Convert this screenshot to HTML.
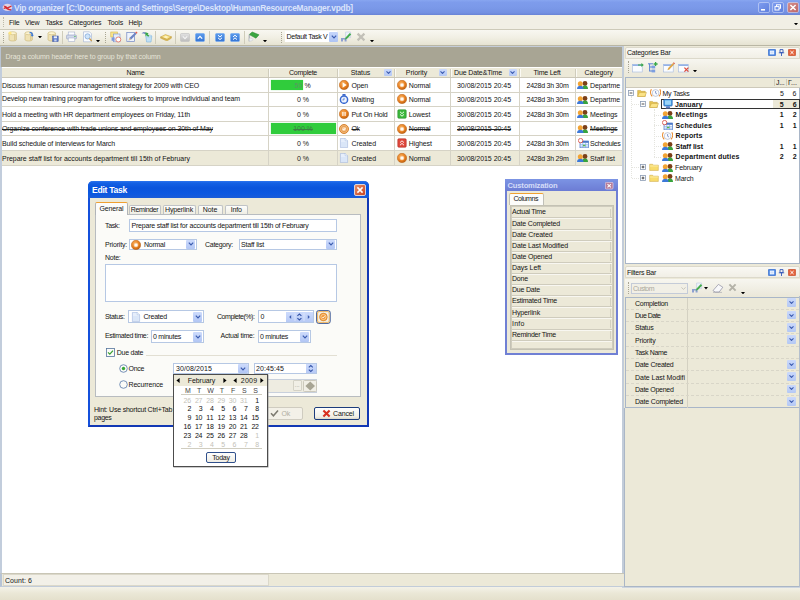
<!DOCTYPE html>
<html><head><meta charset="utf-8"><title>Vip organizer</title>
<style>
*{box-sizing:border-box;margin:0;padding:0}
html,body{width:800px;height:600px;overflow:hidden;background:#ece9d8}
body{position:relative;font-family:"Liberation Sans",sans-serif;font-size:7px;color:#141414}
.a{position:absolute}
.t{position:absolute;white-space:nowrap;font-size:7px;line-height:10px;height:10px}
.b{font-weight:bold}
</style></head><body>
<svg class="a" width="0" height="0" style="left:0;top:0"><defs><radialGradient id="og" cx=".4" cy=".35" r=".7"><stop offset="0" stop-color="#f8b060"/><stop offset=".6" stop-color="#e88020"/><stop offset="1" stop-color="#b85c10"/></radialGradient></defs></svg>
<div class="a" style="left:0px;top:0px;width:800px;height:15px;background:linear-gradient(#88a6f0 0,#7e9cec 15%,#7a98e8 55%,#7390e2 85%,#6883d6 100%)"></div>
<svg class="a" style="left:1.5px;top:2.5px" width="11" height="9" viewBox="0 0 11 9"><ellipse cx="5.400" cy="4.400" rx="4.800" ry="3.600" fill="#f0dce4" opacity=".85"/><path d="M1.400 2.400c1.600 0 3 .8 4 1.800l3.800-1.600.6 1-3.600 1.800c.8.400 2 .8 3.200.8l-.4 1.200C7 7.400 5 6.600 3.600 5.400L2 6l-.6-1 1.400-.6C2.200 3.800 1.800 3.200 1.400 2.400Z" fill="#d42c34"/></svg>
<div class="t b" style="left:14.00px;top:3.20px;letter-spacing:-0.215px;font-size:8.4px;color:#dbe4fb;">Vip organizer [C:\Documents and Settings\Serge\Desktop\HumanResourceManager.vpdb]</div>
<svg class="a" style="left:757.5px;top:2px" width="12" height="11" viewBox="0 0 12 11"><defs><linearGradient id="g757.5" x1="0" y1="0" x2="1" y2="1"><stop offset="0" stop-color="#7f9df0"/><stop offset="1" stop-color="#5f7fdc"/></linearGradient></defs><rect x=".5" y=".5" width="11" height="10" rx="1.5" fill="url(#g757.5)" stroke="#dfe6fb" stroke-opacity=".75" stroke-width=".7"/><rect x="3" y="7" width="4" height="1.6" fill="#fff"/></svg>
<svg class="a" style="left:772px;top:2px" width="12" height="11" viewBox="0 0 12 11"><defs><linearGradient id="g772" x1="0" y1="0" x2="1" y2="1"><stop offset="0" stop-color="#7f9df0"/><stop offset="1" stop-color="#5f7fdc"/></linearGradient></defs><rect x=".5" y=".5" width="11" height="10" rx="1.5" fill="url(#g772)" stroke="#dfe6fb" stroke-opacity=".75" stroke-width=".7"/><rect x="4.5" y="2.8" width="4" height="3.4" fill="none" stroke="#fff" stroke-width="1"/><rect x="3" y="4.6" width="4" height="3.4" fill="#6f8ee6" stroke="#fff" stroke-width="1"/></svg>
<svg class="a" style="left:786.5px;top:2px" width="12" height="11" viewBox="0 0 12 11"><defs><linearGradient id="g786.5" x1="0" y1="0" x2="1" y2="1"><stop offset="0" stop-color="#d6908c"/><stop offset="1" stop-color="#bc6468"/></linearGradient></defs><rect x=".5" y=".5" width="11" height="10" rx="1.5" fill="url(#g786.5)" stroke="#dfe6fb" stroke-opacity=".75" stroke-width=".7"/><path d="M3.4 3 L8.6 8 M8.6 3 L3.4 8" stroke="#fff" stroke-width="1.5"/></svg>
<div class="a" style="left:0px;top:15px;width:800px;height:14px;background:#f1efe5"></div>
<div class="a" style="left:2.5px;top:17px;width:1px;height:10px;border-left:1px dotted #bdbaa8"></div>
<div class="t" style="left:9.00px;top:17.70px;letter-spacing:-0.195px;">File</div>
<div class="t" style="left:25.00px;top:17.70px;letter-spacing:-0.137px;">View</div>
<div class="t" style="left:45.50px;top:17.70px;letter-spacing:-0.179px;">Tasks</div>
<div class="t" style="left:68.50px;top:17.70px;letter-spacing:-0.085px;">Categories</div>
<div class="t" style="left:107.50px;top:17.70px;letter-spacing:-0.168px;">Tools</div>
<div class="t" style="left:128.50px;top:17.70px;letter-spacing:-0.224px;">Help</div>
<svg class="a" style="left:793.5px;top:23px" width="4" height="2.4" viewBox="0 0 4 2.4"><path d="M0 0h4L2 2.400Z" fill="#000"/></svg>
<div class="a" style="left:0px;top:29px;width:800px;height:17px;background:linear-gradient(#f8f7f1,#f1efe4 50%,#e6e3d2);border-top:1px solid #cdcab9;border-bottom:1px solid #b9b6a4"></div>
<div class="a" style="left:3px;top:32px;width:1px;height:11px;border-left:1px dotted #a9a694"></div>
<svg class="a" style="left:8px;top:31px" width="11" height="12" viewBox="0 0 11 12"><path d="M1 2.2v6.3c0 1 1.6 1.5 3.7 1.5s3.7-.5 3.7-1.5V2.2Z" fill="#efe2b4" stroke="#c8b272" stroke-width=".6"/><ellipse cx="4.7" cy="2.2" rx="3.7" ry="1.5" fill="#fbf3d2" stroke="#cdb878" stroke-width=".6"/><path d="M6.8 3.5v6" stroke="#d8c68e" stroke-width="1.2"/><circle cx="2" cy="2" r="1.6" fill="#ffe680"/></svg>
<svg class="a" style="left:24px;top:31px" width="11" height="12" viewBox="0 0 11 12"><path d="M1 2.2v6.3c0 1 1.6 1.5 3.7 1.5s3.7-.5 3.7-1.5V2.2Z" fill="#efe2b4" stroke="#c8b272" stroke-width=".6"/><ellipse cx="4.7" cy="2.2" rx="3.7" ry="1.5" fill="#fbf3d2" stroke="#cdb878" stroke-width=".6"/><path d="M6.8 3.5v6" stroke="#d8c68e" stroke-width="1.2"/><path d="M5.5 1.2c2-.8 3.6.6 3.4 2.6l1 .1-1.8 1.8-1.5-2 1 .1c0-1-.8-1.7-2.1-1.4Z" fill="#3b78d8"/></svg>
<svg class="a" style="left:38px;top:36px" width="4" height="2.4" viewBox="0 0 4 2.4"><path d="M0 0h4L2 2.4Z" fill="#000"/></svg>
<svg class="a" style="left:47px;top:31px" width="12" height="12" viewBox="0 0 12 12"><path d="M1 2.2v6.3c0 1 1.6 1.5 3.7 1.5s3.7-.5 3.7-1.5V2.2Z" fill="#efe2b4" stroke="#c8b272" stroke-width=".6"/><ellipse cx="4.7" cy="2.2" rx="3.7" ry="1.5" fill="#fbf3d2" stroke="#cdb878" stroke-width=".6"/><path d="M6.8 3.5v6" stroke="#d8c68e" stroke-width="1.2"/><rect x="5.6" y="5" width="5.6" height="5.6" fill="#5a78c8" stroke="#3c549c" stroke-width=".5"/><rect x="6.8" y="5.3" width="3.2" height="2" fill="#e8eefc"/><rect x="7.2" y="8.4" width="2.4" height="2" fill="#c8d2ee"/></svg>
<div class="a" style="left:62px;top:31px;width:1px;height:13px;background:#cfccba"></div>
<svg class="a" style="left:66px;top:31px" width="11" height="12" viewBox="0 0 11 12"><rect x="2.2" y="1" width="6.6" height="3.4" fill="#fdfdff" stroke="#9aa6c4" stroke-width=".5"/><rect x=".6" y="4" width="9.8" height="4" rx=".8" fill="#d2d9ea" stroke="#8e9cc0" stroke-width=".6"/><rect x="2.2" y="7" width="6.6" height="3.6" fill="#fdfdff" stroke="#9aa6c4" stroke-width=".5"/><rect x="8.2" y="5" width="1.4" height="1" fill="#58c060"/></svg>
<svg class="a" style="left:82px;top:31px" width="11" height="12" viewBox="0 0 11 12"><path d="M1.5 .8h6l2 2v8h-8Z" fill="#fafcff" stroke="#9fb0d0" stroke-width=".6"/><circle cx="5.6" cy="5.4" r="2.6" fill="#cfe4f8" stroke="#7aa2d8" stroke-width=".7"/><path d="M7.5 7.5l2.2 2.6" stroke="#c89848" stroke-width="1.3"/></svg>
<svg class="a" style="left:96px;top:40px" width="4" height="2.4" viewBox="0 0 4 2.4"><path d="M0 0h4L2 2.4Z" fill="#000"/></svg>
<div class="a" style="left:105px;top:32px;width:1px;height:11px;border-left:1px dotted #a9a694"></div>
<svg class="a" style="left:110px;top:31px" width="12" height="12" viewBox="0 0 12 12"><rect x=".8" y="1" width="6.5" height="5" fill="#f8e48c" stroke="#d4b44c" stroke-width=".6"/><rect x="3.4" y="3" width="6.6" height="7.8" fill="#e4ecfa" stroke="#7890c8" stroke-width=".6"/><rect x="1.6" y="6.4" width="3" height="3.4" fill="#7c98dc"/><circle cx="8.3" cy="8.5" r="2.5" fill="#fff" stroke="#e06858" stroke-width=".8"/></svg>
<svg class="a" style="left:126px;top:31px" width="12" height="12" viewBox="0 0 12 12"><rect x=".8" y="1.6" width="7.6" height="9" fill="#eef3fc" stroke="#6f86c4" stroke-width=".7"/><path d="M2.6 9.4l1-2.6L9.2 1.4l1.4 1.4L5.2 8.4Z" fill="#6c84c4"/><path d="M9.2 1.4l1-1 1.4 1.4-1 1Z" fill="#e05848"/><path d="M2.6 9.4l1-2.6 1.6 1.6Z" fill="#e8c890"/></svg>
<svg class="a" style="left:141px;top:31px" width="12" height="12" viewBox="0 0 12 12"><path d="M4.8 5h6l-.8 6h-4.4Z" fill="#bfe0f6" stroke="#7fb4dc" stroke-width=".6"/><ellipse cx="7.8" cy="5" rx="3" ry=".9" fill="#e4f3fc" stroke="#7fb4dc" stroke-width=".5"/><path d="M.6 2.6c1-2 3.4-2.2 4.6-.6l.4 1.6-2.2-.6C2.600 2.400 1.600 2.400.6 2.600Z" fill="#7e92c8"/><path d="M4.4 1.2l3.2 1-1 1 1.800 1.600-1.2 1-1.800-1.600-1 1Z" fill="#38a848"/></svg>
<div class="a" style="left:155px;top:31px;width:1px;height:13px;background:#cfccba"></div>
<svg class="a" style="left:159.5px;top:33.5px" width="12" height="7.5" viewBox="0 0 12 7.5"><path d="M.6 3l4.800-2.400 6 2.200-4.400 2.800Z" fill="#f8e288" stroke="#c4a040" stroke-width=".6"/><path d="M.6 3v1.200l6.400 2.800 4.400-2.800V2.800L7 5.600Z" fill="#e0bc58" stroke="#b89434" stroke-width=".4"/><ellipse cx="6" cy="3" rx="1.800" ry=".8" fill="#fffadc"/></svg>
<div class="a" style="left:175px;top:31px;width:1px;height:13px;background:#cfccba"></div>
<svg class="a" style="left:180px;top:33px" width="10" height="9" viewBox="0 0 10 9"><defs><linearGradient id="q180" x1="0" y1="0" x2="0" y2="1"><stop offset="0" stop-color="#e2e2e2"/><stop offset="1" stop-color="#bcbcbc"/></linearGradient></defs><rect x=".5" y=".5" width="9" height="8" rx="1" fill="url(#q180)" stroke="#c4c4c4" stroke-width=".7"/><path d="M2.800 3.400L5 5.600 7.200 3.400" fill="none" stroke="#f4f4f4" stroke-width="1.2"/></svg>
<svg class="a" style="left:194.5px;top:33px" width="10" height="9" viewBox="0 0 10 9"><defs><linearGradient id="q194.5" x1="0" y1="0" x2="0" y2="1"><stop offset="0" stop-color="#5c9cec"/><stop offset="1" stop-color="#3474d4"/></linearGradient></defs><rect x=".5" y=".5" width="9" height="8" rx="1" fill="url(#q194.5)" stroke="#78acf0" stroke-width=".7"/><path d="M2.800 5.600L5 3.400 7.200 5.600" fill="none" stroke="#fff" stroke-width="1.300"/></svg>
<div class="a" style="left:209px;top:31px;width:1px;height:13px;background:#cfccba"></div>
<svg class="a" style="left:214.5px;top:33px" width="10" height="9" viewBox="0 0 10 9"><defs><linearGradient id="q214.5" x1="0" y1="0" x2="0" y2="1"><stop offset="0" stop-color="#5c9cec"/><stop offset="1" stop-color="#3474d4"/></linearGradient></defs><rect x=".5" y=".5" width="9" height="8" rx="1" fill="url(#q214.5)" stroke="#78acf0" stroke-width=".7"/><path d="M3 2.200L5 4 7 2.200M3 4.800L5 6.600 7 4.800" fill="none" stroke="#fff" stroke-width="1"/></svg>
<svg class="a" style="left:229.5px;top:33px" width="10" height="9" viewBox="0 0 10 9"><defs><linearGradient id="q229.5" x1="0" y1="0" x2="0" y2="1"><stop offset="0" stop-color="#5c9cec"/><stop offset="1" stop-color="#3474d4"/></linearGradient></defs><rect x=".5" y=".5" width="9" height="8" rx="1" fill="url(#q229.5)" stroke="#78acf0" stroke-width=".7"/><path d="M3 4L5 2.200 7 4M3 6.600L5 4.800 7 6.600" fill="none" stroke="#fff" stroke-width="1"/></svg>
<div class="a" style="left:244px;top:31px;width:1px;height:13px;background:#cfccba"></div>
<svg class="a" style="left:247px;top:31px" width="13" height="12" viewBox="0 0 13 12"><path d="M2.200 3.600L5.200 1l6.800 2.800-3 3.400Z" fill="#3aa640" stroke="#2a8430" stroke-width=".5"/><path d="M2.200 3.600v6.800" stroke="#9aa0a8" stroke-width="1"/><path d="M2.200 7.400c1.600-.8 3 .2 4 1.200-1.400 1.600-3 1.800-4 1.400Z" fill="#eef0f4" stroke="#b4b8c4" stroke-width=".4"/></svg>
<svg class="a" style="left:263px;top:40px" width="4" height="2.4" viewBox="0 0 4 2.4"><path d="M0 0h4L2 2.4Z" fill="#000"/></svg>
<div class="a" style="left:281px;top:32px;width:1px;height:11px;border-left:1px dotted #a9a694"></div>
<div class="a" style="left:285px;top:31px;width:52px;height:11px;background:#fff"></div>
<div class="t" style="left:286.50px;top:32.20px;letter-spacing:-0.286px;">Default Task V</div>
<div class="a" style="left:329px;top:31.5px;width:8.5px;height:10px;background:linear-gradient(#c6d6fb,#aec4f4);border-radius:1px"></div>
<svg class="a" style="left:330.5px;top:34.5px" width="6" height="4" viewBox="0 0 6 4"><path d="M.8 .6L3 2.800 5.200 .6" fill="none" stroke="#3c5cb0" stroke-width="1.200"/></svg>
<svg class="a" style="left:340px;top:31px" width="12" height="12" viewBox="0 0 12 12"><path d="M1 7v3.600h2V8.400h1.600v2.200h2V7" fill="#8ea0d0"/><path d="M5.600 1h5v5.600h-5Z" fill="#eef2fa" stroke="#b4c0dc" stroke-width=".5"/><path d="M4.800 8.800l.8-2.400L9.800 2l1.400 1.400L7 7.800Z" fill="#44ac4c"/></svg>
<svg class="a" style="left:356px;top:32px" width="10" height="10" viewBox="0 0 10 10"><path d="M1.600 1.600L8.400 8.400M8.400 1.600L1.600 8.400" stroke="#c2c0b8" stroke-width="2.200"/></svg>
<svg class="a" style="left:370px;top:40px" width="4" height="2.4" viewBox="0 0 4 2.4"><path d="M0 0h4L2 2.4Z" fill="#000"/></svg>
<div class="a" style="left:0px;top:46px;width:624px;height:21.5px;background:#a8a594;border-left:1px solid #b9c3d2;border-top:1px solid #c4ccd8"></div>
<div class="t" style="left:5.50px;top:52.20px;letter-spacing:-0.109px;color:#e6e4d8;">Drag a column header here to group by that column</div>
<div class="a" style="left:0px;top:67px;width:624px;height:506px;background:#fff;border-left:2px solid #c2cddc"></div>
<div class="a" style="left:2px;top:67.5px;width:620.5px;height:10px;background:#ece9d8;border-bottom:1px solid #cbc7b8"></div>
<div class="t" style="left:126.50px;top:68.20px;letter-spacing:-0.168px;">Name</div>
<div class="t" style="left:289.00px;top:68.20px;letter-spacing:-0.245px;">Complete</div>
<div class="a" style="left:268.3px;top:68.5px;width:1px;height:8px;background:#cfccbc"></div>
<div class="a" style="left:269.3px;top:68.5px;width:1px;height:8px;background:#fbfaf4"></div>
<div class="t" style="left:350.75px;top:68.20px;letter-spacing:-0.057px;">Status</div>
<div class="a" style="left:336.9px;top:68.5px;width:1px;height:8px;background:#cfccbc"></div>
<div class="a" style="left:337.9px;top:68.5px;width:1px;height:8px;background:#fbfaf4"></div>
<div class="t" style="left:405.75px;top:68.20px;letter-spacing:-0.035px;">Priority</div>
<div class="a" style="left:393.9px;top:68.5px;width:1px;height:8px;background:#cfccbc"></div>
<div class="a" style="left:394.9px;top:68.5px;width:1px;height:8px;background:#fbfaf4"></div>
<div class="t" style="left:454.00px;top:68.20px;letter-spacing:-0.118px;">Due Date&amp;Time</div>
<div class="a" style="left:449.5px;top:68.5px;width:1px;height:8px;background:#cfccbc"></div>
<div class="a" style="left:450.5px;top:68.5px;width:1px;height:8px;background:#fbfaf4"></div>
<div class="t" style="left:533.50px;top:68.20px;letter-spacing:-0.213px;">Time Left</div>
<div class="a" style="left:518.9px;top:68.5px;width:1px;height:8px;background:#cfccbc"></div>
<div class="a" style="left:519.9px;top:68.5px;width:1px;height:8px;background:#fbfaf4"></div>
<div class="t" style="left:584.55px;top:68.20px;letter-spacing:0.012px;">Category</div>
<div class="a" style="left:574.9px;top:68.5px;width:1px;height:8px;background:#cfccbc"></div>
<div class="a" style="left:575.9px;top:68.5px;width:1px;height:8px;background:#fbfaf4"></div>
<div class="a" style="left:384.3px;top:69.4px;width:8px;height:6.5px;background:linear-gradient(#cbd9fb,#b4c8f4);border-radius:1px"></div>
<svg class="a" style="left:385.8px;top:71.2px" width="5" height="3" viewBox="0 0 5 3"><path d="M.5 .4L2.500 2.400 4.500 .4" fill="none" stroke="#3c5cb0" stroke-width="1.100"/></svg>
<div class="a" style="left:438.9px;top:69.4px;width:8px;height:6.5px;background:linear-gradient(#cbd9fb,#b4c8f4);border-radius:1px"></div>
<svg class="a" style="left:440.4px;top:71.2px" width="5" height="3" viewBox="0 0 5 3"><path d="M.5 .4L2.500 2.400 4.500 .4" fill="none" stroke="#3c5cb0" stroke-width="1.100"/></svg>
<div class="a" style="left:508.5px;top:69.4px;width:8px;height:6.5px;background:linear-gradient(#cbd9fb,#b4c8f4);border-radius:1px"></div>
<svg class="a" style="left:510.0px;top:71.2px" width="5" height="3" viewBox="0 0 5 3"><path d="M.5 .4L2.500 2.400 4.500 .4" fill="none" stroke="#3c5cb0" stroke-width="1.100"/></svg>
<div class="a" style="left:2px;top:151.2px;width:620.5px;height:14.400000000000006px;background:#ece9d8"></div>
<div class="a" style="left:2px;top:91.6px;width:620.5px;height:1px;background:#d6d3c6"></div>
<div class="a" style="left:2px;top:106.2px;width:620.5px;height:1px;background:#d6d3c6"></div>
<div class="a" style="left:2px;top:120.9px;width:620.5px;height:1px;background:#d6d3c6"></div>
<div class="a" style="left:2px;top:135.4px;width:620.5px;height:1px;background:#d6d3c6"></div>
<div class="a" style="left:2px;top:150.2px;width:620.5px;height:1px;background:#d6d3c6"></div>
<div class="a" style="left:2px;top:165.1px;width:620.5px;height:1px;background:#d6d3c6"></div>
<div class="a" style="left:268.3px;top:77.5px;width:1px;height:88.5px;background:#d6d3c6"></div>
<div class="a" style="left:336.9px;top:77.5px;width:1px;height:88.5px;background:#d6d3c6"></div>
<div class="a" style="left:393.9px;top:77.5px;width:1px;height:88.5px;background:#d6d3c6"></div>
<div class="a" style="left:449.5px;top:77.5px;width:1px;height:88.5px;background:#d6d3c6"></div>
<div class="a" style="left:518.9px;top:77.5px;width:1px;height:88.5px;background:#d6d3c6"></div>
<div class="a" style="left:574.9px;top:77.5px;width:1px;height:88.5px;background:#d6d3c6"></div>
<div class="a" style="left:622px;top:46px;width:2px;height:527px;background:#c2ccd9"></div>
<div class="t" style="left:2.00px;top:80.50px;letter-spacing:-0.147px;">Discuss human resource management strategy for 2009 with CEO</div>
<div class="a" style="left:271px;top:79.5px;width:32.3px;height:10.8px;background:#30cc3c;box-shadow:0 0 1px #8fe496"></div>
<div class="t" style="left:294.60px;top:80.50px;letter-spacing:0.107px;color:#5c9464;">50</div>
<div class="t" style="left:304.40px;top:80.50px;letter-spacing:-0.024px;">%</div>
<svg class="a" style="left:339.2px;top:79.8px" width="10" height="10" viewBox="0 0 10 10"><circle cx="5" cy="5" r="4.700" fill="url(#og)" stroke="#b86418" stroke-width=".5"/><path d="M3.600 2.300L7.700 5 3.600 7.700Z" fill="#fffdf4"/></svg>
<div class="t" style="left:351.50px;top:80.50px;letter-spacing:-0.156px;">Open</div>
<svg class="a" style="left:397px;top:79.8px" width="10" height="10" viewBox="0 0 10 10"><circle cx="5" cy="5" r="4.700" fill="url(#og)" stroke="#b86418" stroke-width=".5"/><circle cx="5" cy="5" r="2.300" fill="#f8c48c"/><circle cx="5" cy="5" r="1.600" fill="#fffaf4"/></svg>
<div class="t" style="left:408.80px;top:80.50px;letter-spacing:-0.176px;">Normal</div>
<div class="t" style="left:457.00px;top:80.50px;letter-spacing:-0.031px;">30/08/2015 20:45</div>
<div class="t" style="left:526.50px;top:80.50px;letter-spacing:-0.230px;">2428d 3h 30m</div>
<svg class="a" style="left:577.2px;top:81.0px" width="11" height="8" viewBox="0 0 11 8"><circle cx="8" cy="2.500" r="2.400" fill="#7c4018"/><path d="M5 8.200c0-2.600 1.200-3.600 3-3.600s3 1 3 3.600Z" fill="#38a43c"/><circle cx="3.300" cy="2.800" r="2.500" fill="#f2a434"/><path d="M0 8.200c0-2.600 1.400-3.400 3.300-3.400s3.300.8 3.300 3.400Z" fill="#3c78d8"/></svg>
<div class="t" style="left:590.00px;top:80.50px;letter-spacing:-0.092px;">Departme</div>
<div class="t" style="left:2.00px;top:93.60px;letter-spacing:-0.095px;">Develop new training program for office workers to improve individual and team</div>
<div class="t" style="left:297.00px;top:95.10px;letter-spacing:-0.021px;color:#222;">0 %</div>
<svg class="a" style="left:339.2px;top:94.4px" width="10" height="10" viewBox="0 0 10 10"><rect x="3.400" y="0" width="3.200" height="1.800" rx=".5" fill="#3c68c8"/><circle cx="5" cy="5.700" r="3.600" fill="#eef4fd" stroke="#3a6ad0" stroke-width="1.500"/><path d="M5 3.800v2.100h-1.600" fill="none" stroke="#4c74cc" stroke-width=".8"/></svg>
<div class="t" style="left:351.50px;top:95.10px;letter-spacing:-0.083px;">Waiting</div>
<svg class="a" style="left:397px;top:94.4px" width="10" height="10" viewBox="0 0 10 10"><circle cx="5" cy="5" r="4.700" fill="url(#og)" stroke="#b86418" stroke-width=".5"/><circle cx="5" cy="5" r="2.300" fill="#f8c48c"/><circle cx="5" cy="5" r="1.600" fill="#fffaf4"/></svg>
<div class="t" style="left:408.80px;top:95.10px;letter-spacing:-0.176px;">Normal</div>
<div class="t" style="left:457.00px;top:95.10px;letter-spacing:-0.031px;">30/08/2015 20:45</div>
<div class="t" style="left:526.50px;top:95.10px;letter-spacing:-0.230px;">2428d 3h 30m</div>
<svg class="a" style="left:577.2px;top:95.60000000000001px" width="11" height="8" viewBox="0 0 11 8"><circle cx="8" cy="2.500" r="2.400" fill="#7c4018"/><path d="M5 8.200c0-2.600 1.200-3.600 3-3.600s3 1 3 3.600Z" fill="#38a43c"/><circle cx="3.300" cy="2.800" r="2.500" fill="#f2a434"/><path d="M0 8.200c0-2.600 1.400-3.400 3.300-3.400s3.300.8 3.300 3.400Z" fill="#3c78d8"/></svg>
<div class="t" style="left:590.00px;top:95.10px;letter-spacing:-0.092px;">Departme</div>
<div class="t" style="left:2.00px;top:109.75px;letter-spacing:-0.106px;">Hold a meeting with HR department employees on Friday, 11th</div>
<div class="t" style="left:297.00px;top:109.75px;letter-spacing:-0.021px;color:#222;">0 %</div>
<svg class="a" style="left:339.2px;top:109.05000000000001px" width="10" height="10" viewBox="0 0 10 10"><circle cx="5" cy="5" r="4.700" fill="url(#og)" stroke="#b86418" stroke-width=".5"/><path d="M3.900 3v4M6.100 3v4" stroke="#fff" stroke-width="1.100"/></svg>
<div class="t" style="left:351.50px;top:109.75px;letter-spacing:-0.194px;">Put On Hold</div>
<svg class="a" style="left:397px;top:109.05000000000001px" width="10" height="10" viewBox="0 0 10 10"><rect x=".8" y=".8" width="8.400" height="8.400" rx="1" fill="#3cb83c" stroke="#2a8c2c" stroke-width=".6"/><path d="M3 2.800L5 4.600 7 2.800M3 5.400L5 7.200 7 5.400" fill="none" stroke="#eafbe8" stroke-width="1"/></svg>
<div class="t" style="left:408.80px;top:109.75px;letter-spacing:-0.113px;">Lowest</div>
<div class="t" style="left:457.00px;top:109.75px;letter-spacing:-0.031px;">30/08/2015 20:45</div>
<div class="t" style="left:526.50px;top:109.75px;letter-spacing:-0.230px;">2428d 3h 30m</div>
<svg class="a" style="left:577.2px;top:110.25000000000001px" width="11" height="8" viewBox="0 0 11 8"><circle cx="8" cy="2.500" r="2.400" fill="#7c4018"/><path d="M5 8.200c0-2.600 1.200-3.600 3-3.600s3 1 3 3.600Z" fill="#38a43c"/><circle cx="3.300" cy="2.800" r="2.500" fill="#f2a434"/><path d="M0 8.200c0-2.600 1.400-3.400 3.300-3.400s3.300.8 3.300 3.400Z" fill="#3c78d8"/></svg>
<div class="t" style="left:590.00px;top:109.75px;letter-spacing:-0.113px;">Meetings</div>
<div class="t" style="left:2.00px;top:124.35px;letter-spacing:-0.099px;color:#222;text-decoration:line-through;text-decoration-thickness:.6px;">Organize conference with trade unions and employees on 30th of May</div>
<div class="a" style="left:271px;top:123.35000000000001px;width:64.6px;height:10.8px;background:#30cc3c;box-shadow:0 0 1px #8fe496"></div>
<div class="t" style="left:293.25px;top:124.35px;letter-spacing:-0.070px;color:#3f7c46;text-decoration:line-through;text-decoration-thickness:.6px;">100 %</div>
<svg class="a" style="left:339.2px;top:123.65px" width="10" height="10" viewBox="0 0 10 10"><circle cx="5" cy="5" r="4.500" fill="#f4b878" stroke="#d07820" stroke-width=".9"/><circle cx="5" cy="5" r="2.700" fill="#f8cc9c" stroke="#e08c38" stroke-width=".7"/><path d="M3.800 5l1 1.100L6.400 3.900" fill="none" stroke="#fff" stroke-width=".9"/></svg>
<div class="t" style="left:351.50px;top:124.35px;letter-spacing:-0.472px;color:#222;text-decoration:line-through;text-decoration-thickness:.6px;">Ok</div>
<svg class="a" style="left:397px;top:123.65px" width="10" height="10" viewBox="0 0 10 10"><circle cx="5" cy="5" r="4.700" fill="url(#og)" stroke="#b86418" stroke-width=".5"/><circle cx="5" cy="5" r="2.300" fill="#f8c48c"/><circle cx="5" cy="5" r="1.600" fill="#fffaf4"/></svg>
<div class="t" style="left:408.80px;top:124.35px;letter-spacing:-0.176px;color:#222;text-decoration:line-through;text-decoration-thickness:.6px;">Normal</div>
<div class="t" style="left:457.00px;top:124.35px;letter-spacing:-0.031px;color:#222;text-decoration:line-through;text-decoration-thickness:.6px;">30/08/2015 20:45</div>
<svg class="a" style="left:577.2px;top:124.85000000000001px" width="11" height="8" viewBox="0 0 11 8"><circle cx="8" cy="2.500" r="2.400" fill="#7c4018"/><path d="M5 8.200c0-2.600 1.200-3.600 3-3.600s3 1 3 3.600Z" fill="#38a43c"/><circle cx="3.300" cy="2.800" r="2.500" fill="#f2a434"/><path d="M0 8.200c0-2.600 1.400-3.400 3.300-3.400s3.300.8 3.300 3.400Z" fill="#3c78d8"/></svg>
<div class="t" style="left:590.00px;top:124.35px;letter-spacing:-0.113px;color:#222;text-decoration:line-through;text-decoration-thickness:.6px;">Meetings</div>
<div class="t" style="left:2.00px;top:139.00px;letter-spacing:-0.129px;">Build schedule of interviews for March</div>
<div class="t" style="left:297.00px;top:139.00px;letter-spacing:-0.021px;color:#222;">0 %</div>
<svg class="a" style="left:339.2px;top:138.3px" width="10" height="10" viewBox="0 0 10 10"><path d="M1.400 .4h4.800l2.400 2.400v6.800H1.400Z" fill="#e6eefb" stroke="#9db4dc" stroke-width=".6"/><path d="M6.200 .4v2.400h2.400" fill="#fff" stroke="#9db4dc" stroke-width=".5"/><path d="M2 4h5.800v5H2Z" fill="#d4e2f6" opacity=".7"/></svg>
<div class="t" style="left:351.50px;top:139.00px;letter-spacing:-0.058px;">Created</div>
<svg class="a" style="left:397px;top:138.3px" width="10" height="10" viewBox="0 0 10 10"><rect x=".8" y=".8" width="8.400" height="8.400" rx="1" fill="#e0483c" stroke="#b02c24" stroke-width=".6"/><path d="M3 4.600L5 2.800 7 4.600M3 7.200L5 5.400 7 7.200" fill="none" stroke="#fdeceb" stroke-width="1"/></svg>
<div class="t" style="left:408.80px;top:139.00px;letter-spacing:-0.105px;">Highest</div>
<div class="t" style="left:457.00px;top:139.00px;letter-spacing:-0.031px;">30/08/2015 20:45</div>
<div class="t" style="left:526.50px;top:139.00px;letter-spacing:-0.230px;">2428d 3h 30m</div>
<svg class="a" style="left:577.5px;top:138.3px" width="11" height="10" viewBox="0 0 11 10"><rect x="2" y="3" width="8.600" height="6.800" fill="#f4f8ff" stroke="#4c78c8" stroke-width=".7"/><rect x="2" y="3" width="8.600" height="1.800" fill="#4c78c8"/><path d="M2 6.600h8.600M2 8.200h8.600M4.800 4.800v5M7.600 4.800v5" stroke="#6c9ce0" stroke-width=".5"/><rect x="5" y="6.800" width="2.400" height="1.400" fill="#58b848"/><circle cx="2.600" cy="2.600" r="2.200" fill="#fff" stroke="#d8483c" stroke-width=".8"/></svg>
<div class="t" style="left:590.00px;top:139.00px;letter-spacing:-0.243px;">Schedules</div>
<div class="t" style="left:2.00px;top:153.85px;letter-spacing:-0.027px;">Prepare staff list for accounts department till 15th of February</div>
<div class="t" style="left:297.00px;top:153.85px;letter-spacing:-0.021px;color:#222;">0 %</div>
<svg class="a" style="left:339.2px;top:153.14999999999998px" width="10" height="10" viewBox="0 0 10 10"><path d="M1.400 .4h4.800l2.400 2.400v6.800H1.400Z" fill="#e6eefb" stroke="#9db4dc" stroke-width=".6"/><path d="M6.200 .4v2.400h2.400" fill="#fff" stroke="#9db4dc" stroke-width=".5"/><path d="M2 4h5.800v5H2Z" fill="#d4e2f6" opacity=".7"/></svg>
<div class="t" style="left:351.50px;top:153.85px;letter-spacing:-0.058px;">Created</div>
<svg class="a" style="left:397px;top:153.14999999999998px" width="10" height="10" viewBox="0 0 10 10"><circle cx="5" cy="5" r="4.700" fill="url(#og)" stroke="#b86418" stroke-width=".5"/><circle cx="5" cy="5" r="2.300" fill="#f8c48c"/><circle cx="5" cy="5" r="1.600" fill="#fffaf4"/></svg>
<div class="t" style="left:408.80px;top:153.85px;letter-spacing:-0.176px;">Normal</div>
<div class="t" style="left:457.00px;top:153.85px;letter-spacing:-0.031px;">30/08/2015 20:45</div>
<div class="t" style="left:526.50px;top:153.85px;letter-spacing:-0.230px;">2428d 3h 29m</div>
<svg class="a" style="left:577.2px;top:154.34999999999997px" width="11" height="8" viewBox="0 0 11 8"><circle cx="8" cy="2.500" r="2.400" fill="#7c4018"/><path d="M5 8.200c0-2.600 1.200-3.600 3-3.600s3 1 3 3.600Z" fill="#38a43c"/><circle cx="3.300" cy="2.800" r="2.500" fill="#f2a434"/><path d="M0 8.200c0-2.600 1.400-3.400 3.300-3.400s3.300.8 3.300 3.400Z" fill="#3c78d8"/></svg>
<div class="t" style="left:590.00px;top:153.85px;letter-spacing:0.023px;">Staff list</div>
<div class="a" style="left:0px;top:572.5px;width:624px;height:14.5px;background:#ece9d8;border-top:1px solid #c9c6b6;border-left:2px solid #b7c4d6;border-bottom:1px solid #c2ccd9"></div>
<div class="a" style="left:2.5px;top:574px;width:266px;height:12px;background:#f2f0e8;border:1px solid #dbd8ca"></div>
<div class="t" style="left:5.00px;top:576.20px;letter-spacing:0.067px;">Count: 6</div>
<div class="a" style="left:0px;top:587px;width:800px;height:13px;background:linear-gradient(#f4f2e8,#eae7d6 50%,#e4e0cc)"></div>
<div class="a" style="left:624px;top:46px;width:176px;height:541px;background:#ece9d8"></div>
<div class="a" style="left:624.5px;top:46.5px;width:175.5px;height:12px;background:linear-gradient(#f9f8f3,#f1efe6);border:1px solid #dcd9cb;border-radius:2px 2px 0 0"></div>
<div class="t" style="left:627.00px;top:48.40px;letter-spacing:-0.228px;">Categories Bar</div>
<svg class="a" style="left:767.5px;top:49.2px" width="8" height="7" viewBox="0 0 8 7"><rect x=".3" y=".3" width="7.400" height="6.400" rx="1" fill="#4c88e4" stroke="#2c60c4" stroke-width=".6"/><rect x="2.2" y="2" width="3.6" height="3" fill="#cfe0fb" stroke="#fff" stroke-width=".7"/></svg>
<svg class="a" style="left:778px;top:49.2px" width="7" height="7" viewBox="0 0 7 7"><path d="M2 .6h3v3H2ZM.8 3.800h5.400M3.500 3.800V7" fill="none" stroke="#3458b8" stroke-width=".9"/></svg>
<svg class="a" style="left:787.5px;top:49.2px" width="8" height="7" viewBox="0 0 8 7"><rect x=".3" y=".3" width="7.400" height="6.400" rx="1" fill="#e4643c" stroke="#bc4424" stroke-width=".6"/><path d="M2.4 2l3.2 3M5.600 2L2.400 5" stroke="#fff" stroke-width="1"/></svg>
<div class="a" style="left:624.5px;top:59px;width:175.5px;height:16px;background:linear-gradient(#f7f6f0,#ebe8da)"></div>
<div class="a" style="left:628px;top:61px;width:1px;height:12px;border-left:1px dotted #a9a694"></div>
<svg class="a" style="left:632px;top:61.5px" width="12" height="11" viewBox="0 0 12 11"><rect x=".6" y="2.400" width="9.600" height="7.600" fill="#fafcff" stroke="#a4b8de" stroke-width=".6"/><rect x=".6" y="2.400" width="9.600" height="1.600" fill="#94b2e6"/><path d="M6 2.400h3.400v-1.400l2.400 2-2.400 2V3.600H6Z" fill="#38a848"/></svg>
<svg class="a" style="left:647px;top:61.5px" width="12" height="11" viewBox="0 0 12 11"><path d="M1 1.800h5M2.600 1.800v7.600M2.600 5h2.400M2.600 9h2.400" fill="none" stroke="#5c84d4" stroke-width="1"/><rect x="4.600" y="3.600" width="3.600" height="2.800" fill="#7c9ee0"/><rect x="4.600" y="7.600" width="3.600" height="2.800" fill="#7c9ee0"/><path d="M8.600 0v4M6.600 2h4" stroke="#38a848" stroke-width="1.300"/></svg>
<svg class="a" style="left:663px;top:61.5px" width="12" height="11" viewBox="0 0 12 11"><rect x=".6" y="2.400" width="9.600" height="7.600" fill="#fafcff" stroke="#a4b8de" stroke-width=".6"/><rect x=".6" y="2.400" width="9.600" height="1.600" fill="#94b2e6"/><path d="M4.400 8.200l.8-2.200L10 1l1.200 1.200L6.400 7.400Z" fill="#e0a848"/><path d="M10 1l.8-.8 1.200 1.200-.8.800Z" fill="#d85040"/></svg>
<svg class="a" style="left:678px;top:61.5px" width="12" height="11" viewBox="0 0 12 11"><rect x=".6" y="2.400" width="9.600" height="7.600" fill="#fafcff" stroke="#a4b8de" stroke-width=".6"/><rect x=".6" y="2.400" width="9.600" height="1.600" fill="#94b2e6"/><path d="M6.400 5.600l4 4M10.400 5.600l-4 4" stroke="#dc4838" stroke-width="1.200"/></svg>
<svg class="a" style="left:693px;top:70px" width="4" height="2.4" viewBox="0 0 4 2.4"><path d="M0 0h4L2 2.4Z" fill="#000"/></svg>
<div class="a" style="left:624.5px;top:76.5px;width:175.5px;height:187px;background:#fff;border:1px solid #a9b6c8"></div>
<div class="a" style="left:625.5px;top:77.5px;width:174px;height:10px;background:#ece9d8;border-bottom:1px solid #cdc9ba"></div>
<div class="a" style="left:774px;top:78.5px;width:1px;height:7.5px;background:#cfccbc"></div>
<div class="a" style="left:785.5px;top:78.5px;width:1px;height:7.5px;background:#cfccbc"></div>
<div class="t" style="left:776.00px;top:77.70px;letter-spacing:-0.209px;">J...</div>
<div class="t" style="left:788.00px;top:77.70px;letter-spacing:0.057px;">Г...</div>
<div class="a" style="left:631px;top:96px;width:1px;height:82px;border-left:1px dotted #e4e4de"></div>
<div class="a" style="left:653.500px;top:109px;width:1px;height:48px;border-left:1px dotted #e4e4de"></div>
<div class="a" style="left:654px;top:114.5px;width:7px;height:1px;border-top:1px dotted #e4e4de"></div>
<div class="a" style="left:654px;top:125px;width:7px;height:1px;border-top:1px dotted #e4e4de"></div>
<div class="a" style="left:654px;top:135.6px;width:7px;height:1px;border-top:1px dotted #e4e4de"></div>
<div class="a" style="left:654px;top:146px;width:7px;height:1px;border-top:1px dotted #e4e4de"></div>
<div class="a" style="left:654px;top:156.6px;width:7px;height:1px;border-top:1px dotted #e4e4de"></div>
<div class="a" style="left:632px;top:104px;width:9px;height:1px;border-top:1px dotted #e4e4de"></div>
<div class="a" style="left:632px;top:167.3px;width:9px;height:1px;border-top:1px dotted #e4e4de"></div>
<div class="a" style="left:632px;top:177.8px;width:9px;height:1px;border-top:1px dotted #e4e4de"></div>
<svg class="a" style="left:628px;top:90.3px" width="6" height="6" viewBox="0 0 6 6"><rect x=".5" y=".5" width="5" height="5" fill="#fff" stroke="#8c9cb4" stroke-width=".8"/><path d="M1.600 3h2.800" stroke="#222" stroke-width=".8"/></svg>
<svg class="a" style="left:637.3px;top:89.3px" width="10" height="8" viewBox="0 0 11 9"><path d="M.6 1.600h3.200l.8 1h4.600v5.800H.6Z" fill="#e8c450" stroke="#b4902c" stroke-width=".5"/><path d="M.6 8.400l2-4.400h8l-2 4.400Z" fill="#fbe488" stroke="#c4a03c" stroke-width=".5"/></svg>
<svg class="a" style="left:650px;top:88.3px" width="11" height="10" viewBox="0 0 11 10"><circle cx="5.600" cy="5" r="3.400" fill="#fbfbfd" stroke="#aab4cc" stroke-width=".7"/><path d="M5.600 3v2.200l1.400.8" fill="none" stroke="#5878c0" stroke-width=".7"/><path d="M1.400 1.200c-1.400 2.400-.8 5.600.8 7.200" fill="none" stroke="#e88828" stroke-width="1.100"/><path d="M9.800 1.200c1.400 2.400.8 5.600-.8 7.200" fill="none" stroke="#e88828" stroke-width="1.100"/></svg>
<div class="t" style="left:662.50px;top:89.00px;letter-spacing:-0.255px;">My Tasks</div>
<div class="t" style="left:780.00px;top:89.00px;letter-spacing:0.107px;">5</div>
<div class="t" style="left:792.50px;top:89.00px;letter-spacing:0.107px;">6</div>
<div class="a" style="left:660.5px;top:98.7px;width:139px;height:10.6px;background:#fff;border:1px solid #333"></div>
<div class="a" style="left:772.5px;top:99.7px;width:26.5px;height:8.6px;background:#ece9d8"></div>
<svg class="a" style="left:640px;top:101px" width="6" height="6" viewBox="0 0 6 6"><rect x=".5" y=".5" width="5" height="5" fill="#fff" stroke="#8c9cb4" stroke-width=".8"/><path d="M1.600 3h2.800" stroke="#222" stroke-width=".8"/></svg>
<svg class="a" style="left:648.8px;top:100px" width="10" height="8" viewBox="0 0 11 9"><path d="M.6 1.600h3.200l.8 1h4.600v5.800H.6Z" fill="#e8c450" stroke="#b4902c" stroke-width=".5"/><path d="M.6 8.400l2-4.400h8l-2 4.400Z" fill="#fbe488" stroke="#c4a03c" stroke-width=".5"/></svg>
<svg class="a" style="left:663px;top:99px" width="10" height="10" viewBox="0 0 10 10"><rect x=".8" y=".4" width="8.400" height="6.600" rx=".8" fill="#48a0e4" stroke="#2c64b4" stroke-width=".7"/><rect x="2" y="1.400" width="6" height="4.400" fill="#9cd4f8"/><path d="M3.400 7.200h3.200l.8 2.400H2.600Z" fill="#5c7cc0"/></svg>
<div class="t b" style="left:675.00px;top:99.70px;letter-spacing:0.093px;">January</div>
<div class="t b" style="left:779.75px;top:99.70px;letter-spacing:0.607px;">5</div>
<div class="t b" style="left:792.75px;top:99.70px;letter-spacing:0.607px;">6</div>
<svg class="a" style="left:661.7px;top:110.7px" width="11" height="8" viewBox="0 0 11 8"><circle cx="8" cy="2.500" r="2.400" fill="#7c4018"/><path d="M5 8.200c0-2.600 1.200-3.600 3-3.600s3 1 3 3.600Z" fill="#38a43c"/><circle cx="3.300" cy="2.800" r="2.500" fill="#f2a434"/><path d="M0 8.200c0-2.600 1.400-3.400 3.300-3.400s3.300.8 3.300 3.400Z" fill="#3c78d8"/></svg>
<div class="t b" style="left:675.50px;top:110.20px;letter-spacing:0.208px;">Meetings</div>
<div class="t b" style="left:779.75px;top:110.20px;letter-spacing:0.607px;">1</div>
<div class="t b" style="left:792.75px;top:110.20px;letter-spacing:0.607px;">2</div>
<svg class="a" style="left:662px;top:120px" width="11" height="10" viewBox="0 0 11 10"><rect x="2" y="3" width="8.600" height="6.800" fill="#f4f8ff" stroke="#4c78c8" stroke-width=".7"/><rect x="2" y="3" width="8.600" height="1.800" fill="#4c78c8"/><path d="M2 6.600h8.600M2 8.200h8.600M4.800 4.800v5M7.600 4.800v5" stroke="#6c9ce0" stroke-width=".5"/><rect x="5" y="6.800" width="2.400" height="1.400" fill="#58b848"/><circle cx="2.600" cy="2.600" r="2.200" fill="#fff" stroke="#d8483c" stroke-width=".8"/></svg>
<div class="t b" style="left:675.50px;top:120.70px;letter-spacing:0.165px;">Schedules</div>
<div class="t b" style="left:779.75px;top:120.70px;letter-spacing:0.607px;">1</div>
<div class="t b" style="left:792.75px;top:120.70px;letter-spacing:0.607px;">1</div>
<svg class="a" style="left:662px;top:130.6px" width="11" height="10" viewBox="0 0 11 10"><circle cx="5.600" cy="5" r="3.400" fill="#fbfbfd" stroke="#aab4cc" stroke-width=".7"/><path d="M5.600 3v2.200l1.400.8" fill="none" stroke="#5878c0" stroke-width=".7"/><path d="M1.400 1.200c-1.400 2.400-.8 5.600.8 7.200" fill="none" stroke="#e88828" stroke-width="1.100"/><path d="M9.800 1.200c1.400 2.400.8 5.600-.8 7.200" fill="none" stroke="#e88828" stroke-width="1.100"/></svg>
<div class="t b" style="left:675.50px;top:131.30px;letter-spacing:0.079px;">Reports</div>
<svg class="a" style="left:661.7px;top:142.2px" width="11" height="8" viewBox="0 0 11 8"><circle cx="8" cy="2.500" r="2.400" fill="#7c4018"/><path d="M5 8.200c0-2.600 1.200-3.600 3-3.600s3 1 3 3.600Z" fill="#38a43c"/><circle cx="3.300" cy="2.800" r="2.500" fill="#f2a434"/><path d="M0 8.200c0-2.600 1.400-3.400 3.300-3.400s3.300.8 3.300 3.400Z" fill="#3c78d8"/></svg>
<div class="t b" style="left:675.50px;top:141.70px;letter-spacing:-0.011px;">Staff list</div>
<div class="t b" style="left:779.75px;top:141.70px;letter-spacing:0.607px;">1</div>
<div class="t b" style="left:792.75px;top:141.70px;letter-spacing:0.607px;">1</div>
<svg class="a" style="left:661.7px;top:152.79999999999998px" width="11" height="8" viewBox="0 0 11 8"><circle cx="8" cy="2.500" r="2.400" fill="#7c4018"/><path d="M5 8.200c0-2.600 1.200-3.600 3-3.600s3 1 3 3.600Z" fill="#38a43c"/><circle cx="3.300" cy="2.800" r="2.500" fill="#f2a434"/><path d="M0 8.200c0-2.600 1.400-3.400 3.300-3.400s3.300.8 3.300 3.400Z" fill="#3c78d8"/></svg>
<div class="t b" style="left:675.50px;top:152.30px;letter-spacing:0.150px;">Department duties</div>
<div class="t b" style="left:779.75px;top:152.30px;letter-spacing:0.607px;">2</div>
<div class="t b" style="left:792.75px;top:152.30px;letter-spacing:0.607px;">2</div>
<svg class="a" style="left:640px;top:164.3px" width="6" height="6" viewBox="0 0 6 6"><rect x=".5" y=".5" width="5" height="5" fill="#fff" stroke="#8c9cb4" stroke-width=".8"/><path d="M1.600 3h2.800" stroke="#222" stroke-width=".8"/><path d="M3 1.600v2.800" stroke="#222" stroke-width=".8"/></svg>
<svg class="a" style="left:648.8px;top:163.3px" width="10" height="8" viewBox="0 0 11 9"><path d="M.6 1.400h3.400l.8 1h5.600v6H.6Z" fill="#f8dc6c" stroke="#c4a03c" stroke-width=".5"/><path d="M.9 3.400h9.200" stroke="#fdf0b0" stroke-width=".9"/></svg>
<svg class="a" style="left:661.7px;top:163.5px" width="11" height="8" viewBox="0 0 11 8"><circle cx="8" cy="2.500" r="2.400" fill="#7c4018"/><path d="M5 8.200c0-2.600 1.200-3.600 3-3.600s3 1 3 3.600Z" fill="#38a43c"/><circle cx="3.300" cy="2.800" r="2.500" fill="#f2a434"/><path d="M0 8.200c0-2.600 1.400-3.400 3.300-3.400s3.300.8 3.300 3.400Z" fill="#3c78d8"/></svg>
<div class="t" style="left:675.00px;top:163.00px;letter-spacing:-0.126px;">February</div>
<svg class="a" style="left:640px;top:174.8px" width="6" height="6" viewBox="0 0 6 6"><rect x=".5" y=".5" width="5" height="5" fill="#fff" stroke="#8c9cb4" stroke-width=".8"/><path d="M1.600 3h2.800" stroke="#222" stroke-width=".8"/><path d="M3 1.600v2.800" stroke="#222" stroke-width=".8"/></svg>
<svg class="a" style="left:648.8px;top:173.8px" width="10" height="8" viewBox="0 0 11 9"><path d="M.6 1.400h3.400l.8 1h5.600v6H.6Z" fill="#f8dc6c" stroke="#c4a03c" stroke-width=".5"/><path d="M.9 3.400h9.200" stroke="#fdf0b0" stroke-width=".9"/></svg>
<svg class="a" style="left:661.7px;top:174.0px" width="11" height="8" viewBox="0 0 11 8"><circle cx="8" cy="2.500" r="2.400" fill="#7c4018"/><path d="M5 8.200c0-2.600 1.200-3.600 3-3.600s3 1 3 3.600Z" fill="#38a43c"/><circle cx="3.300" cy="2.800" r="2.500" fill="#f2a434"/><path d="M0 8.200c0-2.600 1.400-3.400 3.300-3.400s3.300.8 3.300 3.400Z" fill="#3c78d8"/></svg>
<div class="t" style="left:675.00px;top:173.50px;letter-spacing:-0.190px;">March</div>
<div class="a" style="left:624.5px;top:266px;width:175.5px;height:12px;background:linear-gradient(#f9f8f3,#f1efe6);border:1px solid #dcd9cb;border-radius:2px 2px 0 0"></div>
<div class="t" style="left:627.00px;top:267.90px;letter-spacing:-0.263px;">Filters Bar</div>
<svg class="a" style="left:767.5px;top:268.7px" width="8" height="7" viewBox="0 0 8 7"><rect x=".3" y=".3" width="7.400" height="6.400" rx="1" fill="#4c88e4" stroke="#2c60c4" stroke-width=".6"/><rect x="2.2" y="2" width="3.6" height="3" fill="#cfe0fb" stroke="#fff" stroke-width=".7"/></svg>
<svg class="a" style="left:778px;top:268.7px" width="7" height="7" viewBox="0 0 7 7"><path d="M2 .6h3v3H2ZM.8 3.800h5.400M3.500 3.800V7" fill="none" stroke="#3458b8" stroke-width=".9"/></svg>
<svg class="a" style="left:787.5px;top:268.7px" width="8" height="7" viewBox="0 0 8 7"><rect x=".3" y=".3" width="7.400" height="6.400" rx="1" fill="#e4643c" stroke="#bc4424" stroke-width=".6"/><path d="M2.4 2l3.2 3M5.600 2L2.400 5" stroke="#fff" stroke-width="1"/></svg>
<div class="a" style="left:624.5px;top:279px;width:175.5px;height:17px;background:linear-gradient(#f7f6f0,#ebe8da)"></div>
<div class="a" style="left:627.5px;top:282px;width:1px;height:12px;border-left:1px dotted #a9a694"></div>
<div class="a" style="left:630.5px;top:282.5px;width:57.5px;height:11.5px;background:#f1efe6;border:1px solid #c4cbd8"></div>
<div class="t" style="left:633.00px;top:284.00px;letter-spacing:-0.520px;color:#aaa89c;">Custom</div>
<svg class="a" style="left:681px;top:286.5px" width="5" height="3" viewBox="0 0 5 3"><path d="M.4 .4L2.500 2.400 4.600 .4" fill="none" stroke="#c4c2b8" stroke-width=".9"/></svg>
<svg class="a" style="left:691px;top:282px" width="12" height="12" viewBox="0 0 12 12"><path d="M1 7v3.600h2V8.400h1.600v2.200h2V7" fill="#8ea0d0"/><path d="M5.600 1h5v5.600h-5Z" fill="#eef2fa" stroke="#b4c0dc" stroke-width=".5"/><path d="M4.800 8.800l.8-2.400L9.800 2l1.400 1.400L7 7.800Z" fill="#44ac4c"/></svg>
<svg class="a" style="left:703.5px;top:287px" width="4" height="3" viewBox="0 0 4 3"><path d="M0 0h4L2 2.500Z" fill="#000"/></svg>
<svg class="a" style="left:711.5px;top:283px" width="12" height="10" viewBox="0 0 12 10"><path d="M1 7.600L6.400 1.400l4.400 2.800-3.600 4.800H3.200Z" fill="#f8f8fa" stroke="#8c8ca0" stroke-width=".7"/><path d="M1 9.400h9" stroke="#a0a0a8" stroke-width=".6"/></svg>
<svg class="a" style="left:727.5px;top:283px" width="9" height="9" viewBox="0 0 9 9"><path d="M1.400 1.400L7.600 7.600M7.600 1.400L1.400 7.600" stroke="#b4b2a8" stroke-width="2"/></svg>
<svg class="a" style="left:740.5px;top:292px" width="4" height="2.4" viewBox="0 0 4 2.4"><path d="M0 0h4L2 2.4Z" fill="#000"/></svg>
<div class="a" style="left:624.5px;top:296.5px;width:175.5px;height:111.5px;background:#ece9d8;border:1px solid #a9b6c8"></div>
<div class="a" style="left:687px;top:297.5px;width:1px;height:110px;background:#d4d1c2"></div>
<div class="t" style="left:635.00px;top:298.50px;letter-spacing:-0.241px;">Completion</div>
<div class="a" style="left:625.500px;top:308.7px;width:173.500px;height:1px;border-top:1px dashed #d9d6c8"></div>
<div class="a" style="left:787px;top:298.2px;width:9px;height:8.8px;background:linear-gradient(#cbd9fb,#b4c8f4);border-radius:1px"></div>
<svg class="a" style="left:789.0px;top:301.15px" width="5" height="3" viewBox="0 0 5 3"><path d="M.5 .4L2.500 2.400 4.500 .4" fill="none" stroke="#3c5cb0" stroke-width="1.100"/></svg>
<div class="t" style="left:635.00px;top:310.90px;letter-spacing:-0.509px;">Due Date</div>
<div class="a" style="left:625.500px;top:321.1px;width:173.500px;height:1px;border-top:1px dashed #d9d6c8"></div>
<div class="a" style="left:787px;top:310.59999999999997px;width:9px;height:8.8px;background:linear-gradient(#cbd9fb,#b4c8f4);border-radius:1px"></div>
<svg class="a" style="left:789.0px;top:313.54999999999995px" width="5" height="3" viewBox="0 0 5 3"><path d="M.5 .4L2.500 2.400 4.500 .4" fill="none" stroke="#3c5cb0" stroke-width="1.100"/></svg>
<div class="t" style="left:635.00px;top:323.20px;letter-spacing:-0.224px;">Status</div>
<div class="a" style="left:625.500px;top:333.4px;width:173.500px;height:1px;border-top:1px dashed #d9d6c8"></div>
<div class="a" style="left:787px;top:322.9px;width:9px;height:8.8px;background:linear-gradient(#cbd9fb,#b4c8f4);border-radius:1px"></div>
<svg class="a" style="left:789.0px;top:325.84999999999997px" width="5" height="3" viewBox="0 0 5 3"><path d="M.5 .4L2.500 2.400 4.500 .4" fill="none" stroke="#3c5cb0" stroke-width="1.100"/></svg>
<div class="t" style="left:635.00px;top:335.50px;letter-spacing:-0.160px;">Priority</div>
<div class="a" style="left:625.500px;top:345.7px;width:173.500px;height:1px;border-top:1px dashed #d9d6c8"></div>
<div class="a" style="left:787px;top:335.2px;width:9px;height:8.8px;background:linear-gradient(#cbd9fb,#b4c8f4);border-radius:1px"></div>
<svg class="a" style="left:789.0px;top:338.15px" width="5" height="3" viewBox="0 0 5 3"><path d="M.5 .4L2.500 2.400 4.500 .4" fill="none" stroke="#3c5cb0" stroke-width="1.100"/></svg>
<div class="t" style="left:635.00px;top:347.90px;letter-spacing:-0.334px;">Task Name</div>
<div class="a" style="left:625.500px;top:358.1px;width:173.500px;height:1px;border-top:1px dashed #d9d6c8"></div>
<div class="t" style="left:635.00px;top:360.20px;letter-spacing:-0.261px;">Date Created</div>
<div class="a" style="left:625.500px;top:370.4px;width:173.500px;height:1px;border-top:1px dashed #d9d6c8"></div>
<div class="a" style="left:787px;top:359.9px;width:9px;height:8.8px;background:linear-gradient(#cbd9fb,#b4c8f4);border-radius:1px"></div>
<svg class="a" style="left:789.0px;top:362.84999999999997px" width="5" height="3" viewBox="0 0 5 3"><path d="M.5 .4L2.500 2.400 4.500 .4" fill="none" stroke="#3c5cb0" stroke-width="1.100"/></svg>
<div class="t" style="left:635.00px;top:372.50px;letter-spacing:-0.036px;">Date Last Modifi</div>
<div class="a" style="left:625.500px;top:382.7px;width:173.500px;height:1px;border-top:1px dashed #d9d6c8"></div>
<div class="a" style="left:787px;top:372.2px;width:9px;height:8.8px;background:linear-gradient(#cbd9fb,#b4c8f4);border-radius:1px"></div>
<svg class="a" style="left:789.0px;top:375.15px" width="5" height="3" viewBox="0 0 5 3"><path d="M.5 .4L2.500 2.400 4.500 .4" fill="none" stroke="#3c5cb0" stroke-width="1.100"/></svg>
<div class="t" style="left:635.00px;top:384.80px;letter-spacing:-0.286px;">Date Opened</div>
<div class="a" style="left:625.500px;top:395.0px;width:173.500px;height:1px;border-top:1px dashed #d9d6c8"></div>
<div class="a" style="left:787px;top:384.5px;width:9px;height:8.8px;background:linear-gradient(#cbd9fb,#b4c8f4);border-radius:1px"></div>
<svg class="a" style="left:789.0px;top:387.45px" width="5" height="3" viewBox="0 0 5 3"><path d="M.5 .4L2.500 2.400 4.500 .4" fill="none" stroke="#3c5cb0" stroke-width="1.100"/></svg>
<div class="t" style="left:635.00px;top:397.10px;letter-spacing:-0.184px;">Date Completed</div>
<div class="a" style="left:787px;top:396.79999999999995px;width:9px;height:8.8px;background:linear-gradient(#cbd9fb,#b4c8f4);border-radius:1px"></div>
<svg class="a" style="left:789.0px;top:399.74999999999994px" width="5" height="3" viewBox="0 0 5 3"><path d="M.5 .4L2.500 2.400 4.500 .4" fill="none" stroke="#3c5cb0" stroke-width="1.100"/></svg>
<div class="a" style="left:624px;top:408px;width:1px;height:179px;background:#aab6c6"></div>
<div class="a" style="left:624px;top:586px;width:176px;height:1px;background:#aab6c6"></div>
<div class="a" style="left:622px;top:587px;width:178px;height:1px;background:#cdd5df"></div>
<div class="a" style="left:799px;top:296px;width:1px;height:291px;background:#b4bfcd"></div>
<div class="a" style="left:87.5px;top:181px;width:281.5px;height:245.5px;background:#ece9d8;border:2.500px solid #1450dc;border-right-color:#1238b4;border-bottom-color:#1238b4;border-top:none;border-radius:5px 5px 0 0"></div>
<div class="a" style="left:87.5px;top:181px;width:281.5px;height:17px;background:linear-gradient(#2c74ee 0,#1460e4 12%,#0a54dc 40%,#0c58e0 75%,#1a5cd8 100%);border-radius:5px 5px 0 0"></div>
<div class="t b" style="left:92.00px;top:185.25px;letter-spacing:-0.288px;font-size:8.6px;color:#fff;">Edit Task</div>
<svg class="a" style="left:353.5px;top:184px" width="12" height="12" viewBox="0 0 12 12"><defs><linearGradient id="cl" x1="0" y1="0" x2="1" y2="1"><stop offset="0" stop-color="#e8926c"/><stop offset="1" stop-color="#c8401c"/></linearGradient></defs><rect x=".5" y=".5" width="11" height="11" rx="1.500" fill="url(#cl)" stroke="#f4f0ee" stroke-width=".8"/><path d="M3.400 3.400L8.600 8.600M8.600 3.400L3.400 8.600" stroke="#fff" stroke-width="1.500"/></svg>
<div class="a" style="left:94.5px;top:213.5px;width:266.5px;height:183px;background:#fbfbf8;border:1px solid #b8bcc0"></div>
<div class="a" style="left:128.5px;top:204.5px;width:32px;height:9.5px;background:linear-gradient(#fdfdfb,#efeee4);border:1px solid #c0c3c6;border-bottom:none;border-radius:2px 2px 0 0"></div>
<div class="t" style="left:130.75px;top:204.75px;letter-spacing:-0.356px;">Reminder</div>
<div class="a" style="left:162.5px;top:204.5px;width:33px;height:9.5px;background:linear-gradient(#fdfdfb,#efeee4);border:1px solid #c0c3c6;border-bottom:none;border-radius:2px 2px 0 0"></div>
<div class="t" style="left:165.00px;top:204.75px;letter-spacing:-0.131px;">Hyperlink</div>
<div class="a" style="left:197.5px;top:204.5px;width:25px;height:9.5px;background:linear-gradient(#fdfdfb,#efeee4);border:1px solid #c0c3c6;border-bottom:none;border-radius:2px 2px 0 0"></div>
<div class="t" style="left:202.75px;top:204.75px;letter-spacing:-0.072px;">Note</div>
<div class="a" style="left:224.5px;top:204.5px;width:23.5px;height:9.5px;background:linear-gradient(#fdfdfb,#efeee4);border:1px solid #c0c3c6;border-bottom:none;border-radius:2px 2px 0 0"></div>
<div class="t" style="left:230.75px;top:204.75px;letter-spacing:-0.169px;">Info</div>
<div class="a" style="left:95px;top:202px;width:33px;height:12.5px;background:#fcfcfa;border:1px solid #b0b4b8;border-bottom:none;border-top:1.500px solid #f0a030;border-radius:2px 2px 0 0"></div>
<div class="t" style="left:99.50px;top:203.55px;letter-spacing:-0.129px;">General</div>
<div class="t" style="left:105.00px;top:220.75px;letter-spacing:-0.368px;">Task:</div>
<div class="a" style="left:129px;top:219px;width:207.5px;height:12.5px;background:#fff;border:1px solid #b6c8e4"></div>
<div class="t" style="left:131.50px;top:220.75px;letter-spacing:-0.199px;">Prepare staff list for accounts department till 15th of February</div>
<div class="t" style="left:105.00px;top:239.75px;letter-spacing:-0.192px;">Priority:</div>
<div class="a" style="left:129px;top:238.5px;width:67.5px;height:11.5px;background:#fff;border:1px solid #b6c8e4"></div>
<svg class="a" style="left:131px;top:239.5px" width="10" height="10" viewBox="0 0 10 10"><circle cx="5" cy="5" r="4.700" fill="url(#og)" stroke="#b86418" stroke-width=".5"/><circle cx="5" cy="5" r="2.300" fill="#f8c48c"/><circle cx="5" cy="5" r="1.600" fill="#fffaf4"/></svg>
<div class="t" style="left:144.00px;top:239.75px;letter-spacing:-0.260px;">Normal</div>
<div class="a" style="left:186px;top:239.5px;width:9px;height:9.5px;background:linear-gradient(#cddbfc,#b2c6f4);border-radius:1px"></div>
<svg class="a" style="left:187.5px;top:242.45px" width="6" height="4" viewBox="0 0 6 4"><path d="M.8 .6L3 2.800 5.200 .6" fill="none" stroke="#3c5cb0" stroke-width="1.200"/></svg>
<div class="t" style="left:205.00px;top:239.75px;letter-spacing:-0.261px;">Category:</div>
<div class="a" style="left:238.5px;top:238.5px;width:98px;height:11.5px;background:#fff;border:1px solid #b6c8e4"></div>
<div class="t" style="left:241.00px;top:239.75px;letter-spacing:-0.177px;">Staff list</div>
<div class="a" style="left:326px;top:239.5px;width:9px;height:9.5px;background:linear-gradient(#cddbfc,#b2c6f4);border-radius:1px"></div>
<svg class="a" style="left:327.5px;top:242.45px" width="6" height="4" viewBox="0 0 6 4"><path d="M.8 .6L3 2.800 5.200 .6" fill="none" stroke="#3c5cb0" stroke-width="1.200"/></svg>
<div class="t" style="left:105.00px;top:253.25px;letter-spacing:-0.246px;">Note:</div>
<div class="a" style="left:105px;top:264px;width:231.5px;height:37.5px;background:#fff;border:1px solid #b6c8e4"></div>
<div class="t" style="left:105.00px;top:311.75px;letter-spacing:-0.327px;">Status:</div>
<div class="a" style="left:128px;top:310px;width:75.5px;height:12.5px;background:#fff;border:1px solid #b6c8e4"></div>
<svg class="a" style="left:131px;top:311.5px" width="10" height="10" viewBox="0 0 10 10"><path d="M1.400 .4h4.800l2.400 2.400v6.800H1.400Z" fill="#e6eefb" stroke="#9db4dc" stroke-width=".6"/><path d="M6.200 .4v2.400h2.400" fill="#fff" stroke="#9db4dc" stroke-width=".5"/><path d="M2 4h5.800v5H2Z" fill="#d4e2f6" opacity=".7"/></svg>
<div class="t" style="left:143.50px;top:311.75px;letter-spacing:-0.200px;">Created</div>
<div class="a" style="left:193px;top:311.5px;width:9px;height:10px;background:linear-gradient(#cddbfc,#b2c6f4);border-radius:1px"></div>
<svg class="a" style="left:194.5px;top:314.7px" width="6" height="4" viewBox="0 0 6 4"><path d="M.8 .6L3 2.800 5.200 .6" fill="none" stroke="#3c5cb0" stroke-width="1.200"/></svg>
<div class="t" style="left:217.00px;top:311.75px;letter-spacing:-0.441px;">Complete(%):</div>
<div class="a" style="left:258px;top:310px;width:55.5px;height:12.5px;background:#fff;border:1px solid #b6c8e4"></div>
<div class="t" style="left:260.50px;top:311.75px;letter-spacing:-0.093px;">0</div>
<div class="a" style="left:285.5px;top:311.5px;width:27px;height:10px;background:linear-gradient(#cddbfc,#b6c9f5)"></div>
<svg class="a" style="left:285.5px;top:311.5px" width="27" height="10" viewBox="0 0 27 10"><path d="M5.200 3L3.200 5l2 2Z" fill="#3c5cb0"/><path d="M21.800 3l2 2-2 2Z" fill="#3c5cb0"/><path d="M11.400 3.800l2-1.800 2 1.800M11.400 6.200l2 1.800 2-1.800" fill="none" stroke="#3454a8" stroke-width="1.100"/><path d="M9 1v8M18 1v8" stroke="#dfe8fd" stroke-width=".8"/></svg>
<svg class="a" style="left:316px;top:309.8px" width="15" height="14" viewBox="0 0 15 14"><rect x=".6" y=".6" width="13.600" height="12.800" rx="2" fill="#f4f2ea" stroke="#28488c" stroke-width=".9"/><rect x="1.600" y="1.600" width="11.600" height="10.800" rx="1.400" fill="none" stroke="#f0b050" stroke-width=".9"/><circle cx="7.400" cy="7" r="3.900" fill="#f29a38" stroke="#d07c24" stroke-width=".5"/><circle cx="7.400" cy="7" r="2.600" fill="none" stroke="#fbdcb4" stroke-width=".7"/><path d="M6.200 7l1 1 1.600-2.200" fill="none" stroke="#fff" stroke-width=".8"/></svg>
<div class="t" style="left:105.00px;top:331.25px;letter-spacing:-0.349px;">Estimated time:</div>
<div class="a" style="left:150.5px;top:330px;width:53px;height:12.5px;background:#fff;border:1px solid #b6c8e4"></div>
<div class="t" style="left:153.00px;top:331.75px;letter-spacing:-0.261px;">0 minutes</div>
<div class="a" style="left:193px;top:331.5px;width:9px;height:10px;background:linear-gradient(#cddbfc,#b2c6f4);border-radius:1px"></div>
<svg class="a" style="left:194.5px;top:334.7px" width="6" height="4" viewBox="0 0 6 4"><path d="M.8 .6L3 2.800 5.200 .6" fill="none" stroke="#3c5cb0" stroke-width="1.200"/></svg>
<div class="t" style="left:220.50px;top:331.25px;letter-spacing:-0.214px;">Actual time:</div>
<div class="a" style="left:257.5px;top:330px;width:53px;height:12.5px;background:#fff;border:1px solid #b6c8e4"></div>
<div class="t" style="left:260.00px;top:331.75px;letter-spacing:-0.261px;">0 minutes</div>
<div class="a" style="left:300px;top:331.5px;width:9px;height:10px;background:linear-gradient(#cddbfc,#b2c6f4);border-radius:1px"></div>
<svg class="a" style="left:301.5px;top:334.7px" width="6" height="4" viewBox="0 0 6 4"><path d="M.8 .6L3 2.800 5.200 .6" fill="none" stroke="#3c5cb0" stroke-width="1.200"/></svg>
<svg class="a" style="left:106px;top:348.3px" width="8.6" height="8.6" viewBox="0 0 8.6 8.6"><rect x=".5" y=".5" width="8" height="8" fill="#fbfbf8" stroke="#54749c" stroke-width=".8"/><path d="M2 4.400l1.800 1.800L7 2.600" fill="none" stroke="#38a030" stroke-width="1.200"/></svg>
<div class="t" style="left:116.70px;top:347.75px;letter-spacing:-0.239px;">Due date</div>
<div class="a" style="left:146px;top:354.5px;width:190.5px;height:1px;background:#e2dfd3"></div>
<svg class="a" style="left:118.5px;top:363.5px" width="9" height="9" viewBox="0 0 9 9"><circle cx="4.500" cy="4.500" r="3.800" fill="#fbfbf8" stroke="#5878a8" stroke-width=".8"/><circle cx="4.500" cy="4.500" r="1.700" fill="#38a838"/></svg>
<div class="t" style="left:128.50px;top:363.55px;letter-spacing:-0.308px;">Once</div>
<svg class="a" style="left:118.5px;top:380.0px" width="9" height="9" viewBox="0 0 9 9"><circle cx="4.500" cy="4.500" r="3.800" fill="#fbfbf8" stroke="#5878a8" stroke-width=".8"/></svg>
<div class="t" style="left:128.50px;top:379.75px;letter-spacing:-0.168px;">Recurrence</div>
<div class="a" style="left:173px;top:362.5px;width:76px;height:11.5px;background:#fff;border:1px solid #b6c8e4"></div>
<div class="t" style="left:176.00px;top:363.55px;letter-spacing:0.097px;">30/08/2015</div>
<div class="a" style="left:238px;top:364px;width:9.5px;height:9px;background:linear-gradient(#cddbfc,#b2c6f4);border-radius:1px"></div>
<svg class="a" style="left:239.75px;top:366.7px" width="6" height="4" viewBox="0 0 6 4"><path d="M.8 .6L3 2.800 5.200 .6" fill="none" stroke="#3c5cb0" stroke-width="1.200"/></svg>
<div class="a" style="left:253.5px;top:362.5px;width:63.5px;height:11.5px;background:#fff;border:1px solid #b6c8e4"></div>
<div class="t" style="left:256.00px;top:363.55px;letter-spacing:0.094px;">20:45:45</div>
<div class="a" style="left:306px;top:364px;width:9.5px;height:9px;background:linear-gradient(#cddbfc,#b6c9f5)"></div>
<svg class="a" style="left:306px;top:364px" width="9.5" height="9" viewBox="0 0 9.5 9"><path d="M2.800 3.400l2-1.800 2 1.800M2.800 5.600l2 1.800 2-1.800" fill="none" stroke="#3454a8" stroke-width="1.100"/></svg>
<div class="a" style="left:173px;top:378.5px;width:144px;height:14px;background:#eeece1;border:1px solid #c8d0dc"></div>
<div class="a" style="left:292.5px;top:380px;width:9px;height:11px;background:#f1efe6;border:1px solid #d4d2c6;border-radius:1px"></div>
<div class="t" style="left:294.50px;top:379.75px;letter-spacing:-0.278px;color:#b8b6aa;">...</div>
<div class="a" style="left:303px;top:379.5px;width:13.5px;height:12px;background:#f1efe6;border:1px solid #ccc9bc;border-radius:1.500px"></div>
<svg class="a" style="left:304.5px;top:380.5px" width="10.5" height="10" viewBox="0 0 10.5 10"><path d="M5.200 .6L10 5 5.200 9.400.4 5Z" fill="#a8a594"/></svg>
<div class="t" style="left:94.00px;top:405.25px;letter-spacing:-0.209px;">Hint: Use shortcut Ctrl+Tab to switch between</div>
<div class="t" style="left:94.00px;top:413.05px;letter-spacing:-0.314px;">pages</div>
<div class="a" style="left:257px;top:406.5px;width:45.5px;height:13.5px;background:#f3f1e8;border:1px solid #cfccc0;border-radius:2px"></div>
<svg class="a" style="left:269.5px;top:409px" width="9" height="8" viewBox="0 0 9 8"><path d="M1 4.200l2.400 2.600L8 1.400" fill="none" stroke="#7c7a70" stroke-width="1.500"/></svg>
<div class="t" style="left:281.50px;top:408.75px;letter-spacing:-0.222px;color:#b0aea2;">Ok</div>
<div class="a" style="left:314px;top:406.5px;width:46px;height:13.5px;background:linear-gradient(#fefefd,#f1efe6 80%,#dcd9ca);border:1px solid #1c3c7c;border-radius:2px"></div>
<svg class="a" style="left:321.5px;top:408.5px" width="9" height="9" viewBox="0 0 9 9"><path d="M1.400 1.600L7.600 7.600M7.600 1.400L1.400 7.600" stroke="#d83020" stroke-width="2.100"/></svg>
<div class="t" style="left:333.00px;top:408.75px;letter-spacing:-0.132px;">Cancel</div>
<div class="a" style="left:173px;top:374px;width:94.5px;height:92.5px;background:#fff;border:1px solid #4c4c4c;box-shadow:.5px .5px 0 #999"></div>
<div class="a" style="left:174px;top:375px;width:92.5px;height:11px;background:#ece9d8"></div>
<svg class="a" style="left:176px;top:377.8px" width="4" height="5" viewBox="0 0 4 5"><path d="M3.600 0v5L.4 2.500Z" fill="#000"/></svg>
<div class="t" style="left:187.75px;top:376.20px;letter-spacing:-0.064px;">February</div>
<svg class="a" style="left:222.5px;top:377.8px" width="4" height="5" viewBox="0 0 4 5"><path d="M.4 0v5l3.200-2.500Z" fill="#000"/></svg>
<svg class="a" style="left:232.5px;top:377.8px" width="4" height="5" viewBox="0 0 4 5"><path d="M3.600 0v5L.4 2.500Z" fill="#000"/></svg>
<div class="t" style="left:240.75px;top:376.20px;letter-spacing:0.232px;">2009</div>
<svg class="a" style="left:260px;top:377.8px" width="4" height="5" viewBox="0 0 4 5"><path d="M.4 0v5l3.200-2.500Z" fill="#000"/></svg>
<div class="t" style="left:184.99px;top:385.50px;letter-spacing:-0.204px;color:#444;">M</div>
<div class="t" style="left:197.04px;top:385.50px;letter-spacing:-0.150px;color:#444;">T</div>
<div class="t" style="left:207.21px;top:385.50px;letter-spacing:-0.231px;color:#444;">W</div>
<div class="t" style="left:219.64px;top:385.50px;letter-spacing:-0.150px;color:#444;">T</div>
<div class="t" style="left:230.94px;top:385.50px;letter-spacing:-0.150px;color:#444;">F</div>
<div class="t" style="left:242.05px;top:385.50px;letter-spacing:-0.163px;color:#444;">S</div>
<div class="t" style="left:253.35px;top:385.50px;letter-spacing:-0.163px;color:#444;">S</div>
<div class="a" style="left:181px;top:394.2px;width:81px;height:1px;background:#d0cdc0"></div>
<div class="t" style="left:183.60px;top:395.60px;letter-spacing:-0.193px;color:#c4c2b8;">26</div>
<div class="t" style="left:194.90px;top:395.60px;letter-spacing:-0.193px;color:#c4c2b8;">27</div>
<div class="t" style="left:206.20px;top:395.60px;letter-spacing:-0.193px;color:#c4c2b8;">28</div>
<div class="t" style="left:217.50px;top:395.60px;letter-spacing:-0.193px;color:#c4c2b8;">29</div>
<div class="t" style="left:228.80px;top:395.60px;letter-spacing:-0.193px;color:#c4c2b8;">30</div>
<div class="t" style="left:240.10px;top:395.60px;letter-spacing:-0.193px;color:#c4c2b8;">31</div>
<div class="t" style="left:255.20px;top:395.60px;letter-spacing:-0.293px;color:#111;">1</div>
<div class="t" style="left:187.40px;top:404.40px;letter-spacing:-0.293px;color:#111;">2</div>
<div class="t" style="left:198.70px;top:404.40px;letter-spacing:-0.293px;color:#111;">3</div>
<div class="t" style="left:210.00px;top:404.40px;letter-spacing:-0.293px;color:#111;">4</div>
<div class="t" style="left:221.30px;top:404.40px;letter-spacing:-0.293px;color:#111;">5</div>
<div class="t" style="left:232.60px;top:404.40px;letter-spacing:-0.293px;color:#111;">6</div>
<div class="t" style="left:243.90px;top:404.40px;letter-spacing:-0.293px;color:#111;">7</div>
<div class="t" style="left:255.20px;top:404.40px;letter-spacing:-0.293px;color:#111;">8</div>
<div class="t" style="left:187.40px;top:413.20px;letter-spacing:-0.293px;color:#111;">9</div>
<div class="t" style="left:194.90px;top:413.20px;letter-spacing:-0.193px;color:#111;">10</div>
<div class="t" style="left:206.20px;top:413.20px;letter-spacing:0.067px;color:#111;">11</div>
<div class="t" style="left:217.50px;top:413.20px;letter-spacing:-0.193px;color:#111;">12</div>
<div class="t" style="left:228.80px;top:413.20px;letter-spacing:-0.193px;color:#111;">13</div>
<div class="t" style="left:240.10px;top:413.20px;letter-spacing:-0.193px;color:#111;">14</div>
<div class="t" style="left:251.40px;top:413.20px;letter-spacing:-0.193px;color:#111;">15</div>
<div class="t" style="left:183.60px;top:422.00px;letter-spacing:-0.193px;color:#111;">16</div>
<div class="t" style="left:194.90px;top:422.00px;letter-spacing:-0.193px;color:#111;">17</div>
<div class="t" style="left:206.20px;top:422.00px;letter-spacing:-0.193px;color:#111;">18</div>
<div class="t" style="left:217.50px;top:422.00px;letter-spacing:-0.193px;color:#111;">19</div>
<div class="t" style="left:228.80px;top:422.00px;letter-spacing:-0.193px;color:#111;">20</div>
<div class="t" style="left:240.10px;top:422.00px;letter-spacing:-0.193px;color:#111;">21</div>
<div class="t" style="left:251.40px;top:422.00px;letter-spacing:-0.193px;color:#111;">22</div>
<div class="t" style="left:183.60px;top:430.70px;letter-spacing:-0.193px;color:#111;">23</div>
<div class="t" style="left:194.90px;top:430.70px;letter-spacing:-0.193px;color:#111;">24</div>
<div class="t" style="left:206.20px;top:430.70px;letter-spacing:-0.193px;color:#111;">25</div>
<div class="t" style="left:217.50px;top:430.70px;letter-spacing:-0.193px;color:#111;">26</div>
<div class="t" style="left:228.80px;top:430.70px;letter-spacing:-0.193px;color:#111;">27</div>
<div class="t" style="left:240.10px;top:430.70px;letter-spacing:-0.193px;color:#111;">28</div>
<div class="t" style="left:255.20px;top:430.70px;letter-spacing:-0.293px;color:#c4c2b8;">1</div>
<div class="t" style="left:187.40px;top:439.50px;letter-spacing:-0.293px;color:#c4c2b8;">2</div>
<div class="t" style="left:198.70px;top:439.50px;letter-spacing:-0.293px;color:#c4c2b8;">3</div>
<div class="t" style="left:210.00px;top:439.50px;letter-spacing:-0.293px;color:#c4c2b8;">4</div>
<div class="t" style="left:221.30px;top:439.50px;letter-spacing:-0.293px;color:#c4c2b8;">5</div>
<div class="t" style="left:232.60px;top:439.50px;letter-spacing:-0.293px;color:#c4c2b8;">6</div>
<div class="t" style="left:243.90px;top:439.50px;letter-spacing:-0.293px;color:#c4c2b8;">7</div>
<div class="t" style="left:255.20px;top:439.50px;letter-spacing:-0.293px;color:#c4c2b8;">8</div>
<div class="a" style="left:181px;top:448.3px;width:81px;height:1px;background:#d0cdc0"></div>
<div class="a" style="left:206px;top:452px;width:30px;height:11px;background:linear-gradient(#fefefd,#efede4);border:1px solid #30508c;border-radius:2px"></div>
<div class="t" style="left:212.25px;top:453.40px;letter-spacing:-0.236px;">Today</div>
<div class="a" style="left:505px;top:178.7px;width:112.5px;height:176px;background:#ece9d8;border:2.500px solid #7080d4;border-top:none"></div>
<div class="a" style="left:505px;top:178.7px;width:112.5px;height:12.5px;background:linear-gradient(#7c94e4,#7488dc 50%,#6c7cd4)"></div>
<div class="t b" style="left:507.50px;top:181.45px;letter-spacing:-0.181px;font-size:7.6px;color:#d4dcf8;">Customization</div>
<svg class="a" style="left:605.2px;top:182.3px" width="8.4" height="7.4" viewBox="0 0 8.4 7.4"><rect x=".35" y=".35" width="7.700" height="6.700" rx="1" fill="#b87c98" stroke="#dcd4ec" stroke-width=".7"/><path d="M2.500 2.100l3.400 3.200M5.900 2.100L2.500 5.300" stroke="#fff" stroke-width="1.100"/></svg>
<div class="a" style="left:509.5px;top:204.5px;width:104px;height:145px;background:#f4f3ec;border:1px solid #c4c2b4"></div>
<div class="a" style="left:509px;top:192.8px;width:34.5px;height:12.5px;background:#fcfcfa;border:1px solid #c0c0b8;border-bottom:none;border-top:1.500px solid #f0a030;border-radius:2px 2px 0 0"></div>
<div class="t" style="left:513.50px;top:194.05px;letter-spacing:-0.446px;">Columns</div>
<div class="a" style="left:510.5px;top:205.5px;width:102px;height:143px;background:#ece9d8;border:1px solid #cfccbd"></div>
<div class="t" style="left:512.00px;top:207.45px;letter-spacing:-0.279px;">Actual Time</div>
<div class="a" style="left:511.5px;top:217.39999999999998px;width:100px;height:1px;background:#cfccbd"></div>
<div class="a" style="left:511.5px;top:218.39999999999998px;width:100px;height:1px;background:#f8f7f1"></div>
<div class="a" style="left:610px;top:208.6px;width:1px;height:8px;background:#d2cfbf"></div>
<div class="t" style="left:512.00px;top:218.57px;letter-spacing:-0.184px;">Date Completed</div>
<div class="a" style="left:511.5px;top:228.51999999999998px;width:100px;height:1px;background:#cfccbd"></div>
<div class="a" style="left:511.5px;top:229.51999999999998px;width:100px;height:1px;background:#f8f7f1"></div>
<div class="a" style="left:610px;top:219.72px;width:1px;height:8px;background:#d2cfbf"></div>
<div class="t" style="left:512.00px;top:229.69px;letter-spacing:-0.095px;">Date Created</div>
<div class="a" style="left:511.5px;top:239.64px;width:100px;height:1px;background:#cfccbd"></div>
<div class="a" style="left:511.5px;top:240.64px;width:100px;height:1px;background:#f8f7f1"></div>
<div class="a" style="left:610px;top:230.84px;width:1px;height:8px;background:#d2cfbf"></div>
<div class="t" style="left:512.00px;top:240.81px;letter-spacing:-0.131px;">Date Last Modified</div>
<div class="a" style="left:511.5px;top:250.76px;width:100px;height:1px;background:#cfccbd"></div>
<div class="a" style="left:511.5px;top:251.76px;width:100px;height:1px;background:#f8f7f1"></div>
<div class="a" style="left:610px;top:241.96px;width:1px;height:8px;background:#d2cfbf"></div>
<div class="t" style="left:512.00px;top:251.93px;letter-spacing:-0.149px;">Date Opened</div>
<div class="a" style="left:511.5px;top:261.88px;width:100px;height:1px;background:#cfccbd"></div>
<div class="a" style="left:511.5px;top:262.88px;width:100px;height:1px;background:#f8f7f1"></div>
<div class="a" style="left:610px;top:253.08px;width:1px;height:8px;background:#d2cfbf"></div>
<div class="t" style="left:512.00px;top:263.05px;letter-spacing:-0.063px;">Days Left</div>
<div class="a" style="left:511.5px;top:272.99999999999994px;width:100px;height:1px;background:#cfccbd"></div>
<div class="a" style="left:511.5px;top:273.99999999999994px;width:100px;height:1px;background:#f8f7f1"></div>
<div class="a" style="left:610px;top:264.19999999999993px;width:1px;height:8px;background:#d2cfbf"></div>
<div class="t" style="left:512.00px;top:274.17px;letter-spacing:-0.184px;">Done</div>
<div class="a" style="left:511.5px;top:284.11999999999995px;width:100px;height:1px;background:#cfccbd"></div>
<div class="a" style="left:511.5px;top:285.11999999999995px;width:100px;height:1px;background:#f8f7f1"></div>
<div class="a" style="left:610px;top:275.31999999999994px;width:1px;height:8px;background:#d2cfbf"></div>
<div class="t" style="left:512.00px;top:285.29px;letter-spacing:-0.197px;">Due Date</div>
<div class="a" style="left:511.5px;top:295.23999999999995px;width:100px;height:1px;background:#cfccbd"></div>
<div class="a" style="left:511.5px;top:296.23999999999995px;width:100px;height:1px;background:#f8f7f1"></div>
<div class="a" style="left:610px;top:286.43999999999994px;width:1px;height:8px;background:#d2cfbf"></div>
<div class="t" style="left:512.00px;top:296.41px;letter-spacing:-0.231px;">Estimated Time</div>
<div class="a" style="left:511.5px;top:306.35999999999996px;width:100px;height:1px;background:#cfccbd"></div>
<div class="a" style="left:511.5px;top:307.35999999999996px;width:100px;height:1px;background:#f8f7f1"></div>
<div class="a" style="left:610px;top:297.55999999999995px;width:1px;height:8px;background:#d2cfbf"></div>
<div class="t" style="left:512.00px;top:307.53px;letter-spacing:-0.131px;">Hyperlink</div>
<div class="a" style="left:511.5px;top:317.47999999999996px;width:100px;height:1px;background:#cfccbd"></div>
<div class="a" style="left:511.5px;top:318.47999999999996px;width:100px;height:1px;background:#f8f7f1"></div>
<div class="a" style="left:610px;top:308.67999999999995px;width:1px;height:8px;background:#d2cfbf"></div>
<div class="t" style="left:512.00px;top:318.65px;letter-spacing:0.206px;">Info</div>
<div class="a" style="left:511.5px;top:328.59999999999997px;width:100px;height:1px;background:#cfccbd"></div>
<div class="a" style="left:511.5px;top:329.59999999999997px;width:100px;height:1px;background:#f8f7f1"></div>
<div class="a" style="left:610px;top:319.79999999999995px;width:1px;height:8px;background:#d2cfbf"></div>
<div class="t" style="left:512.00px;top:329.77px;letter-spacing:-0.266px;">Reminder Time</div>
<div class="a" style="left:511.5px;top:339.71999999999997px;width:100px;height:1px;background:#cfccbd"></div>
<div class="a" style="left:511.5px;top:340.71999999999997px;width:100px;height:1px;background:#f8f7f1"></div>
<div class="a" style="left:610px;top:330.91999999999996px;width:1px;height:8px;background:#d2cfbf"></div>
</body></html>
